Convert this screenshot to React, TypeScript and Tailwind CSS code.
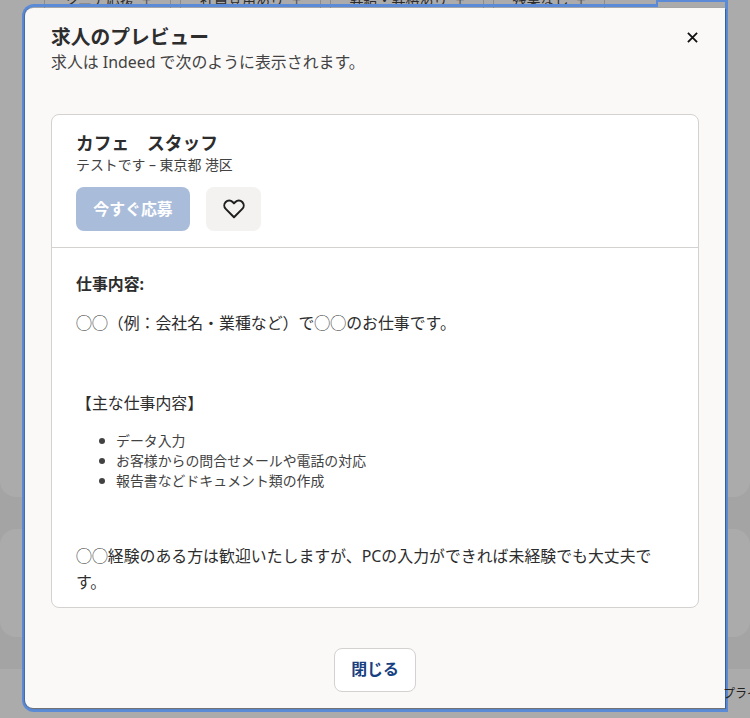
const FONT = "font-['Noto_Sans','Noto_Sans_CJK_JP',sans-serif]";

function Chip({ label, className }: { label: string; className: string }) {
  return (
    <div className={`h-[46px] shrink-0 border border-[#8c8c8c] rounded-lg flex items-end justify-center gap-2 pb-[5px] text-[14px] leading-[20px] text-[#2b2b2b] ${className}`}>
      <span>{label}</span>
      <span className="text-[16px] text-[#555]">+</span>
    </div>
  );
}

function Item({ children }: { children: string }) {
  return (
    <li className="flex items-center h-[20px]">
      <span className="w-[6px] h-[6px] rounded-full bg-[#424242] ml-[23px] mr-[11px] shrink-0" />
      <span>{children}</span>
    </li>
  );
}

export default function App() {
  return (
    <div className={`relative w-[750px] h-[718px] overflow-hidden bg-[#a4a4a4] ${FONT}`}>
      {/* dimmed page behind the dialog */}
      <div className="absolute left-0 top-0 w-[750px] h-[497px] rounded-b-2xl bg-[#ababab]" />
      <div className="absolute left-0 top-[529px] w-[750px] h-[108px] rounded-2xl bg-[#ababab]" />
      <div className="absolute left-0 top-[669px] w-[750px] h-[49px] bg-[#ababab]" />
      <div className="absolute left-[44px] top-[-30px] flex gap-[9px]">
        <Chip label="シニア応援" className="w-[127px]" />
        <Chip label="社員登用あり" className="w-[141px]" />
        <Chip label="昇給・昇格あり" className="w-[154px]" />
        <Chip label="残業なし" className="w-[112px]" />
      </div>

      {/* focus outline */}
      <div className="absolute left-[22px] top-[4px] w-[636px] h-[40px] border-l-[3px] border-t-[3px] border-[#5b8ad6] rounded-tl-xl" />
      <div className="absolute left-[656px] top-0 w-[72px] h-[44px] border-t-[2px] border-r-[3px] border-[#5b8ad6]" />
      <div className="absolute left-[656px] top-0 w-[2px] h-[7px] bg-[#5b8ad6]" />
      <div className="absolute left-[22px] top-[44px] h-[668px] w-[706px] border-l-[3px] border-r-[3px] border-b-[3px] border-[#5b8ad6] rounded-bl-xl" />

      {/* dialog */}
      <div role="dialog" className="absolute left-[25px] top-[8px] w-[700px] h-[700px] bg-[#faf9f8] rounded-tl-lg rounded-bl-lg flex flex-col shadow-[1px_1px_1px_rgba(0,0,0,0.35),-1px_0_1px_rgba(0,0,0,0.25)]">
        <div className="flex justify-between px-[26px] pt-[15px]">
          <div>
            <h2 className="text-[19.75px] leading-[28px] font-bold text-[#2d2d2d]">求人のプレビュー</h2>
            <p className="text-[15.9px] leading-[22px] text-[#424242]">求人は Indeed で次のように表示されます。</p>
          </div>
          <button className="w-[14px] h-[14px] mt-[7px] flex items-center justify-center">
            <svg viewBox="0 0 12 12" className="w-[11px] h-[11px]" fill="none" stroke="#111" strokeWidth="2">
              <path d="M1 1l10 10M11 1L1 11" />
            </svg>
          </button>
        </div>

        <div className="mx-[26px] mt-[41px] h-[494px] bg-white border border-[#d4d2d0] rounded-lg flex flex-col overflow-hidden">
          <div className="px-[24px] pt-[15px] pb-[16px] border-b border-[#d4d2d0]">
            <h3 className="text-[17.75px] leading-[26px] font-bold text-[#2d2d2d]">カフェ　スタッフ</h3>
            <p className="text-[13.9px] leading-[18px] text-[#424242]">テストです – 東京都 港区</p>
            <div className="flex gap-[16px] mt-[13px]">
              <button className="w-[114px] h-[44px] pt-[1px] rounded-lg bg-[#a9bcda] text-white text-[15.9px] font-bold">今すぐ応募</button>
              <button className="w-[55px] h-[44px] rounded-lg bg-[#f3f2f1] flex items-center justify-center">
                <svg viewBox="0 0 24 22" className="w-[22px] h-[20px]" fill="none" stroke="#1f1f1f" strokeWidth="2.2" strokeLinejoin="round">
                  <path d="M12 20 2.9 10.9a5.4 5.4 0 0 1 0-7.6 5.3 5.3 0 0 1 7.6 0L12 4.8l1.5-1.5a5.3 5.3 0 0 1 7.6 0 5.4 5.4 0 0 1 0 7.6L12 20z" />
                </svg>
              </button>
            </div>
          </div>
          <div className="px-[24px] pt-[24px] text-[15.9px] leading-[24px] text-[#2d2d2d]">
            <p className="font-bold">仕事内容:</p>
            <p className="mt-[15px]">◯◯（例：会社名・業種など）で◯◯のお仕事です。</p>
            <p className="mt-[56px]">【主な仕事内容】</p>
            <ul className="mt-[16px] text-[13.9px] leading-[20px] text-[#424242]">
              <Item>データ入力</Item>
              <Item>お客様からの問合せメールや電話の対応</Item>
              <Item>報告書などドキュメント類の作成</Item>
            </ul>
            <p className="mt-[52px] leading-[26px]">◯◯経験のある方は歓迎いたしますが、PCの入力ができれば未経験でも大丈夫です。</p>
          </div>
        </div>

        <div className="flex justify-center mt-[40px]">
          <button className="w-[82px] h-[44px] rounded-lg bg-white border border-[#d4d2d0] text-[15.9px] font-bold text-[#164081]">閉じる</button>
        </div>
      </div>

      <div className="absolute left-[723px] top-[686px] text-[12px] leading-[16px] text-[#222] whitespace-nowrap">プライ</div>
    </div>
  );
}
